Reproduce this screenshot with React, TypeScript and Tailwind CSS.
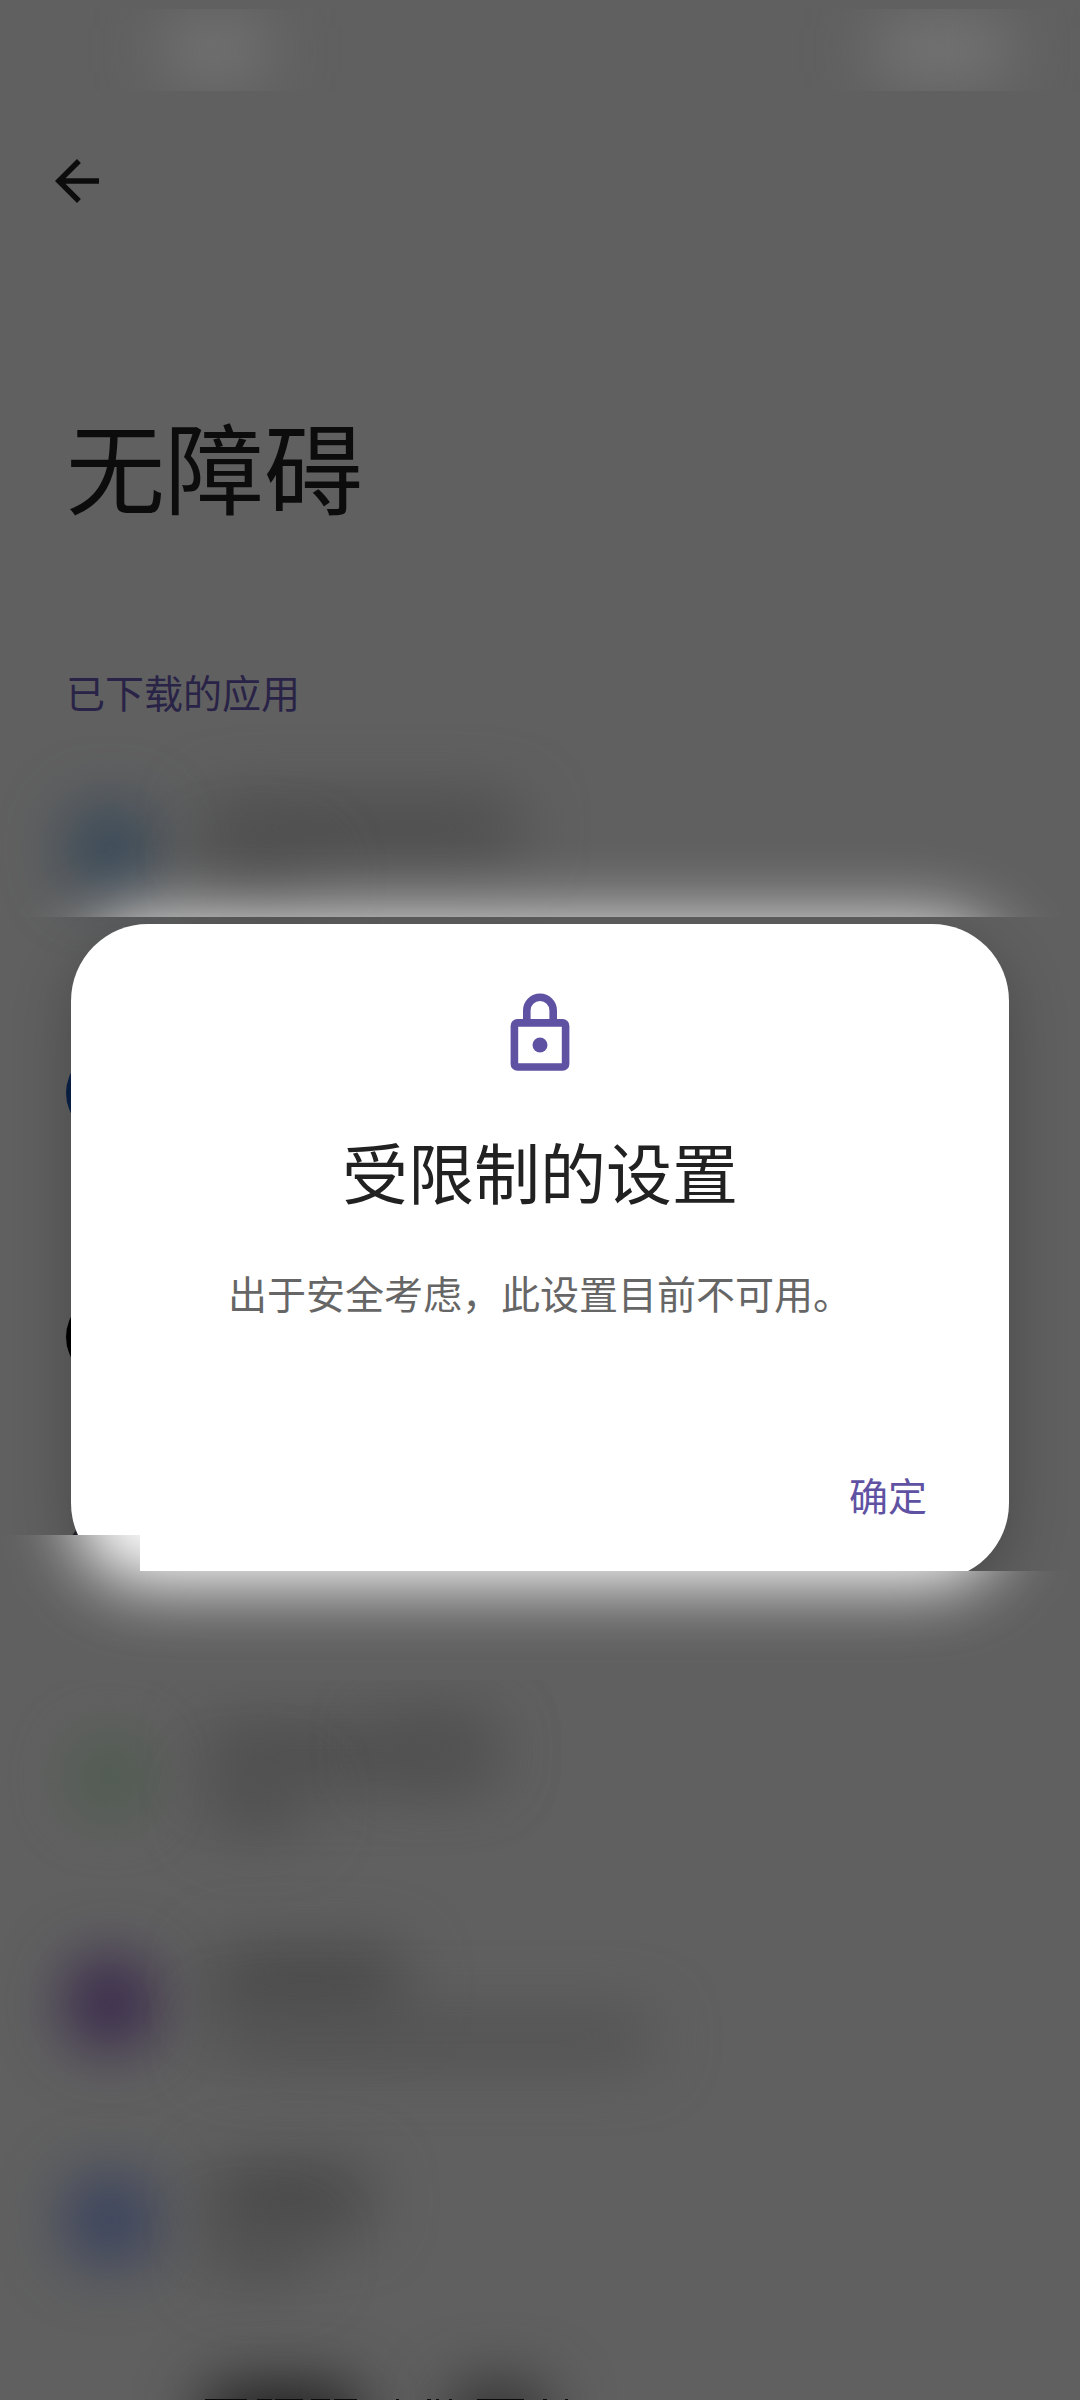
const cjk = "font-['Noto_Sans_CJK_SC',sans-serif]";

type Row = { height: string; icon: string; bars: string[] };

// Obscured list entries: an icon blob plus the smudges left by its labels
const rows: Row[] = [
  {
    height: 'h-[222px]',
    icon: 'top-[50px] bg-[#334657] blur-[31px]',
    bars: [
      'left-[206px] top-[46px] w-[314px] h-[54px] bg-[#4a4a4a]',
      'left-[206px] top-[96px] w-[110px] h-[44px] bg-[#4d4d4d]',
    ],
  },
  { height: 'h-[243px]', icon: 'top-[72px] bg-[#0b2149]', bars: [] },
  { height: 'h-[222px]', icon: 'top-[73px] bg-black', bars: [] },
  { height: 'h-[222px]', icon: 'top-[72px] bg-[#24242c]', bars: [] },
  {
    height: 'h-[222px]',
    icon: 'top-[69px] bg-[#515c52] blur-[26px]',
    bars: [
      'left-[206px] top-[64px] w-[284px] h-[52px] bg-[#4b4b4b]',
      'left-[380px] top-[58px] w-[110px] h-[52px] bg-[#515151]',
      'left-[210px] top-[114px] w-[96px] h-[50px] bg-[#4c4c4c]',
    ],
  },
  {
    height: 'h-[222px]',
    icon: 'top-[73px] bg-[#321f48] blur-[32px]',
    bars: [
      'left-[212px] top-[66px] w-[190px] h-[60px] bg-[#464646]',
      'left-[212px] top-[130px] w-[440px] h-[44px] bg-[#4f4f4f]',
    ],
  },
  {
    height: 'h-[187px]',
    icon: 'top-[68px] bg-[#333d5e] blur-[32px]',
    bars: [
      'left-[212px] top-[62px] w-[156px] h-[58px] bg-[#444444]',
      'left-[212px] top-[122px] w-[96px] h-[46px] bg-[#4b4b4b]',
    ],
  },
  {
    height: 'h-[105px]',
    icon: 'hidden',
    bars: [
      'left-[204px] top-[92px] w-[156px] h-[70px] bg-[#1a1a1a]',
      'left-[450px] top-[92px] w-[96px] h-[70px] bg-[#2a2a2a]',
    ],
  },
];

// x ranges of the label strokes that just reach the screen's last pixel row
const strokeTops = [
  [205, 247], [257, 272], [275, 303], [311, 330], [334, 357], [396, 399],
  [427, 431], [436, 439], [449, 452], [477, 524], [543, 547], [565, 568],
];

function ListRow({ row }: { row: Row }) {
  return (
    <li className={`relative w-full shrink-0 ${row.height}`}>
      <span className={`absolute left-[66px] size-[88px] rounded-full ${row.icon}`} />
      {row.bars.map((bar, i) => (
        <span key={i} className={`absolute rounded-[20px] blur-[32px] ${bar}`} />
      ))}
    </li>
  );
}

function StatusBar() {
  return (
    <div className="h-[91px] pt-[9px]">
      <div className="flex h-[82px] items-center justify-between overflow-hidden pl-[165px] pr-[72px]">
        <span className="h-[54px] w-[100px] bg-[#777777] blur-[32px]" />
        <span className="h-[54px] w-[132px] bg-[#797979] blur-[32px]" />
      </div>
    </div>
  );
}

function BackArrow() {
  return (
    <svg className="size-[66px]" viewBox="0 0 24 24" fill="#0c0c0c">
      <path d="M20 11H7.83l5.59-5.59L12 4l-8 8 8 8 1.41-1.41L7.83 13H20v-2z" />
    </svg>
  );
}

function LockIcon() {
  return (
    <svg className="h-[78px] w-[60px]" viewBox="0 0 60 78" fill="none" stroke="#6052a3" strokeWidth="7.6">
      <rect x="4.4" y="29.9" width="51.2" height="44.1" rx="3" />
      <path d="M16.8 30V17.4a13.2 13.2 0 0 1 26.4 0V30" />
      <circle cx="30" cy="52" r="7.5" fill="#6052a3" stroke="none" />
    </svg>
  );
}

function Dialog() {
  return (
    <div className="absolute left-[71px] top-[924px] flex h-[656px] w-[938px] flex-col items-center rounded-[77px] bg-white pt-[69px] shadow-[0_16px_60px_rgba(0,0,0,0.24)]">
      <LockIcon />
      <h2 className="mt-[51px] text-[66px] leading-[96px] text-[#212121]">受限制的设置</h2>
      <p className="mt-[46px] text-[39px] leading-[56px] text-[#666666]">出于安全考虑，此设置目前不可用。</p>
      <button className="mt-[146px] mr-[82px] self-end text-[39px] leading-[56px] text-[#6052a3]">确定</button>
    </div>
  );
}

export default function App() {
  return (
    <div className={`relative h-[2400px] w-[1080px] overflow-hidden bg-[#606060] ${cjk}`}>
      <StatusBar />
      <header className="flex h-[664px] flex-col">
        <div className="pl-[44px] pt-[57px]">
          <BackArrow />
        </div>
        <h1 className="mt-[179px] pl-[66px] text-[99px] leading-[142px] text-[#0c0c0c]">无障碍</h1>
        <p className="mt-[128px] pl-[66px] text-[39px] leading-[56px] text-[#292347]">已下载的应用</p>
      </header>

      <ul className="flex flex-col">
        {rows.map((row, i) => (
          <ListRow key={i} row={row} />
        ))}
      </ul>

      <svg className="absolute bottom-0 left-0 h-px w-full" viewBox="0 0 1080 1" fill="#0c0c0c">
        {strokeTops.map(([from, to]) => (
          <rect key={from} x={from} y="0" width={to - from} height="1" />
        ))}
      </svg>

      <Dialog />

      {/* Glow bleeding from the dialog's upper edge */}
      <div className="absolute left-0 top-[755px] h-[162px] w-full overflow-hidden">
        <div className="absolute left-[71px] top-[167px] h-[300px] w-[938px] rounded-[77px] bg-white blur-[35px]" />
      </div>

      {/* Lower edge: steps up over the dialog's bottom left corner */}
      <div className="absolute left-0 top-[1535px] h-[145px] w-full overflow-hidden bg-[#606060] [clip-path:polygon(0_0,140px_0,140px_36px,100%_36px,100%_100%,0_100%)]">
        <div className="absolute left-[71px] top-[-595px] h-[656px] w-[938px] rounded-[77px] bg-black/24 blur-[30px]" />
        <div className="absolute left-[71px] top-[-611px] h-[664px] w-[938px] rounded-[77px] bg-white blur-[34px]" />
      </div>
    </div>
  );
}
